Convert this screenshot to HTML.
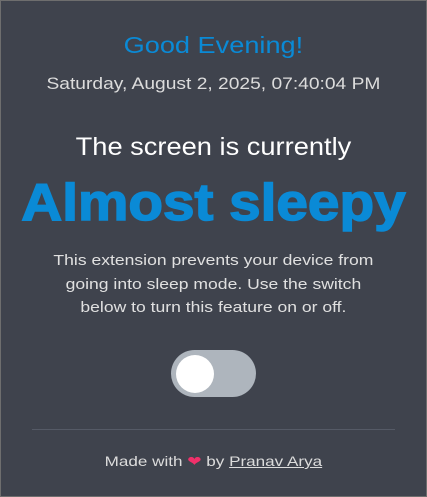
<!DOCTYPE html>
<html><head><meta charset="utf-8"><style>
html,body{margin:0;padding:0;}
body{width:427px;height:497px;background:#3f434d;font-family:"Liberation Sans",sans-serif;position:relative;overflow:hidden;box-sizing:border-box;border:1px solid #6e6e6e;}
.t{position:absolute;left:0;width:425px;text-align:center;white-space:nowrap;transform-origin:213px 0;}
</style></head><body>
<div class="t" style="top:31px;font-size:23px;color:#0a8ad6;transform:scaleX(1.18);">Good Evening!</div>
<div class="t" style="top:73px;font-size:17px;color:#dcdcdc;transform:scaleX(1.13);">Saturday, August 2, 2025, 07:40:04 PM</div>
<div class="t" style="top:132px;font-size:25px;color:#fff;transform:scaleX(1.09);">The screen is currently</div>
<div class="t" style="top:172px;font-size:52px;font-weight:bold;color:#0a8ad6;transform:scaleX(1.09);-webkit-text-stroke:1.5px #0a8ad6;">Almost sleepy</div>
<div class="t" style="top:248px;font-size:15px;line-height:23.5px;color:#e0e0e0;transform:scaleX(1.17);">This extension prevents your device from<br>going into sleep mode. Use the switch<br>below to turn this feature on or off.</div>
<div style="position:absolute;left:170px;top:349px;width:85px;height:47px;border-radius:24px;background:#aeb5bd;"></div>
<div style="position:absolute;left:175px;top:354px;width:38px;height:38px;border-radius:50%;background:#fff;"></div>
<div style="position:absolute;left:31px;top:428px;width:363px;height:1px;background:#555a66;"></div>
<div class="t" style="top:452px;font-size:14px;color:#dcdcdc;transform:scaleX(1.22);">Made with <span style="color:#f0306a;">&#10084;</span> by <span style="text-decoration:underline;">Pranav Arya</span></div>
</body></html>
